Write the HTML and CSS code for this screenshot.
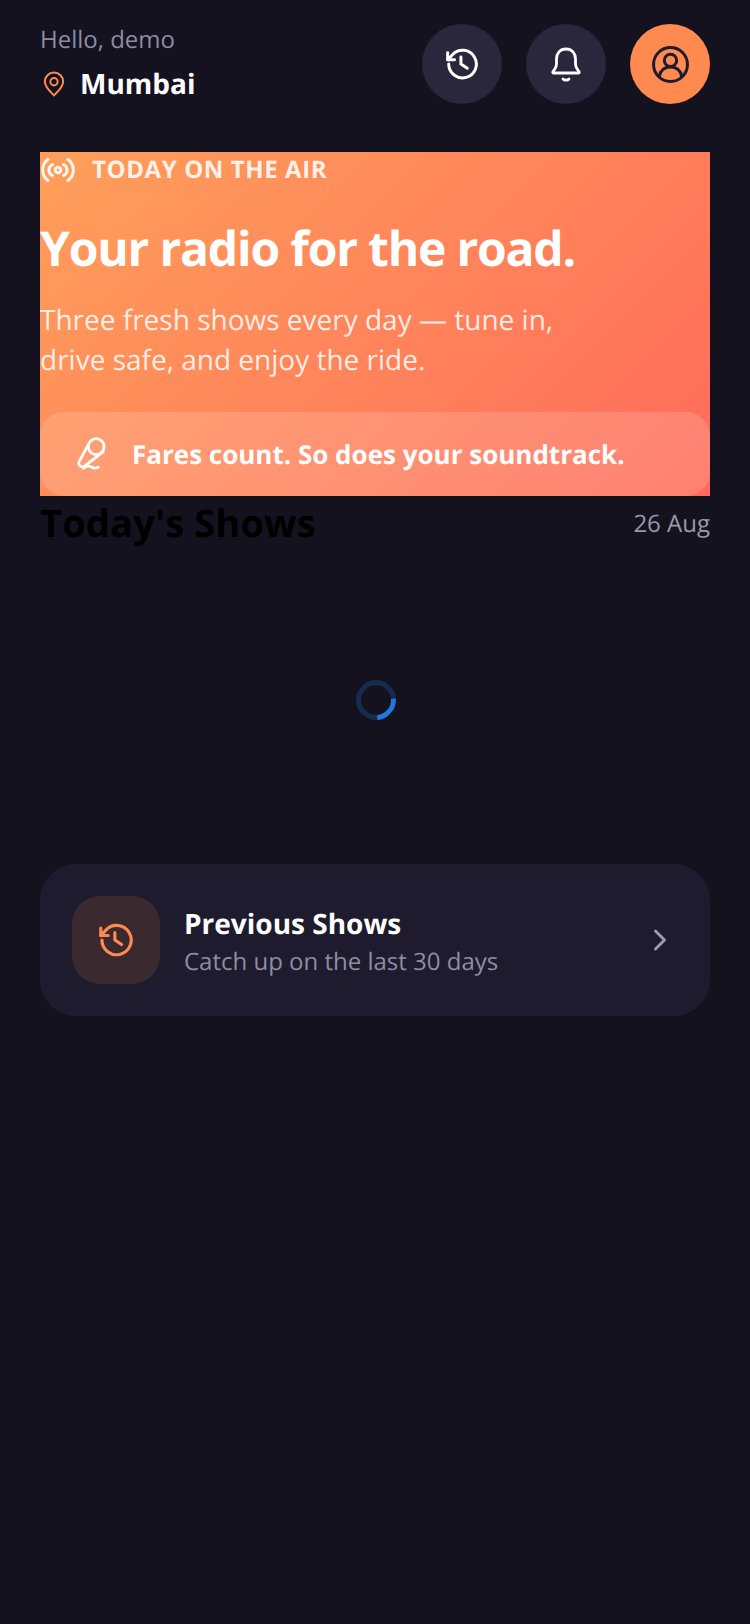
FILE: index.html
```html
<!DOCTYPE html>
<html lang="en">
<head>
  <meta charset="UTF-8" />
  <meta name="viewport" content="width=device-width, initial-scale=1.0" />
  <title>Today on the air</title>
  <link rel="stylesheet" href="styles.css">
</head>
<body>
  <header class="top">
    <div class="who">
      <div class="hello">Hello, demo</div>
      <div class="city">
        <svg class="pin" viewBox="0 0 24 28" fill="none" stroke="currentColor" stroke-width="2.2" stroke-linejoin="round">
          <path d="M12 26.5C7 21.5 2 17 2 11.5a10 10 0 0 1 20 0c0 5.500-5 10-10 15z"/>
          <circle cx="12" cy="11.500" r="4"/>
        </svg>
        <span>Mumbai</span>
      </div>
    </div>
    <div class="actions">
      <button class="round">
        <svg class="icon-history" viewBox="1 0 32 32" fill="none" stroke="currentColor" stroke-width="2.800" stroke-linecap="round" stroke-linejoin="round">
          <path d="M4.500 16A13 13 0 1 0 8 7.200L3.500 12"/>
          <path d="M3.500 5.500V12H10"/>
          <path d="M16 9.500V16l6 4"/>
        </svg>
      </button>
      <button class="round">
        <svg class="icon-bell" viewBox="-1 0 34 35" fill="none" stroke="currentColor" stroke-width="2.800" stroke-linecap="round" stroke-linejoin="round">
          <path d="M16 2c-6 0-9.500 4.500-9.500 10v5c0 3-1.500 5-3.500 7.500-.6 1-.2 1.500 1 1.500h24c1.200 0 1.600-.5 1-1.500-2-2.500-3.500-4.500-3.500-7.500v-5C25.500 6.500 22 2 16 2z"/>
          <path d="M13 32c1.500 1.600 4.500 1.600 6 0"/>
        </svg>
      </button>
      <button class="round round-accent">
        <svg class="icon-user" viewBox="0 0 36 36" fill="none" stroke="currentColor" stroke-width="2.900" stroke-linecap="round" stroke-linejoin="round">
          <circle cx="18" cy="18" r="16.500"/>
          <circle cx="18" cy="14" r="6"/>
          <path d="M7 30c1-6 5-9.500 11-9.500S28 24 29 30"/>
        </svg>
      </button>
    </div>
  </header>

  <section class="hero">
    <div class="air">
      <svg viewBox="0 0 34 24" fill="none" stroke="currentColor" stroke-width="3" stroke-linecap="round">
        <circle cx="17" cy="12" r="2.800"/>
        <path d="M11.500 6.500a6 6 0 0 0 0 11"/>
        <path d="M22.500 6.500a6 6 0 0 1 0 11"/>
        <path d="M7 1.500a13 13 0 0 0 0 21"/>
        <path d="M27 1.500a13 13 0 0 1 0 21"/>
      </svg>
      <span>TODAY ON THE AIR</span>
    </div>
    <h1>Your radio for the road.</h1>
    <p>Three fresh shows every day — tune in,<br>drive safe, and enjoy the ride.</p>
    <div class="tagline">
      <svg viewBox="0 0 30 34" fill="none" stroke="currentColor" stroke-width="2.600" stroke-linecap="round" stroke-linejoin="round">
        <circle cx="18" cy="10" r="7.500"/>
        <path d="M10.500 8.500L2 24c-1.500 3 1.500 6 4.500 5L24.500 15"/>
        <path d="M6 30.500c3-3 6-2 8-1 2 1 4 1 6 0"/>
      </svg>
      <span>Fares count. So does your soundtrack.</span>
    </div>
  </section>

  <div class="shows-head">
    <h2>Today's Shows</h2>
    <span class="date">26 Aug</span>
  </div>

  <div class="loading"><div class="spinner"></div></div>

  <div class="prev-card">
    <div class="prev-icon">
      <svg viewBox="1 0 32 32" fill="none" stroke="currentColor" stroke-width="2.800" stroke-linecap="round" stroke-linejoin="round">
        <path d="M4.500 16A13 13 0 1 0 8 7.200L3.500 12"/>
        <path d="M3.500 5.500V12H10"/>
        <path d="M16 9.500V16l6 4"/>
      </svg>
    </div>
    <div class="prev-text">
      <div class="prev-title">Previous Shows</div>
      <div class="prev-sub">Catch up on the last 30 days</div>
    </div>
    <svg class="chevron" viewBox="0 0 16 24" fill="none" stroke="currentColor" stroke-width="3" stroke-linecap="round" stroke-linejoin="round">
      <path d="M3.500 3l9 9-9 9"/>
    </svg>
  </div>
</body>
</html>
```

FILE: styles.css
```css
* {
  box-sizing: border-box;
}
body {
  margin: 0;
  padding: 24px 40px;
  min-height: 1624px;
  background-color: #14121f;
  font-family: "Open Sans", sans-serif;
  text-rendering: geometricPrecision;
  color: white;
}
svg {
  display: block;
}
.top {
  display: flex;
  justify-content: space-between;
  align-items: flex-start;
  margin-bottom: 48px;
}
.hello {
  font-size: 24px;
  line-height: 32px;
  color: #8e8ca3;
}
.city {
  display: flex;
  align-items: center;
  gap: 15px;
  margin-top: 8px;
  font-size: 28px;
  line-height: 40px;
  font-weight: 700;
}
.pin {
  width: 22px;
  height: 26px;
  margin-left: 3px;
  color: #ff8a50;
}
.actions {
  display: flex;
  gap: 24px;
}
.round {
  display: flex;
  align-items: center;
  justify-content: center;
  width: 80px;
  height: 80px;
  padding: 0;
  border: none;
  border-radius: 50%;
  background-color: #2a263b;
  color: white;
}
.icon-history {
  width: 34px;
  height: 34px;
}
.icon-bell {
  width: 34px;
  height: 35px;
}
.round-accent {
  background-color: #ff8a50;
  color: #1e1b2e;
}
.icon-user {
  width: 37px;
  height: 37px;
}
.hero {
  height: 344px;
  padding-top: 3px;
  background: linear-gradient(135deg, #ff9f5a, #ff6b5b);
  display: flex;
  flex-direction: column;
}
.air {
  display: flex;
  align-items: center;
  gap: 17px;
  font-size: 24px;
  line-height: 30px;
  font-weight: 700;
  letter-spacing: 0.6px;
  color: rgba(255, 255, 255, 0.9);
}
.air svg {
  width: 34px;
  height: 24px;
  margin-left: 1px;
}
.hero h1 {
  margin: 32px 0 0;
  font-size: 48px;
  line-height: 64px;
  font-weight: 700;
  letter-spacing: -1.2px;
}
.hero p {
  margin: 19px 0 0;
  font-size: 28px;
  line-height: 40px;
  color: rgba(255, 255, 255, 0.85);
}
.tagline {
  display: flex;
  align-items: center;
  gap: 23px;
  height: 84px;
  margin-top: auto;
  padding: 0 37px;
  border-radius: 24px;
  background-color: rgba(255, 255, 255, 0.15);
  font-size: 26px;
  font-weight: 700;
}
.tagline svg {
  width: 32px;
  height: 36px;
}
.shows-head {
  display: flex;
  justify-content: space-between;
  align-items: center;
  height: 54px;
}
.shows-head h2 {
  margin: 0;
  font-size: 38px;
  font-weight: 700;
  letter-spacing: 0.15px;
  color: black;
}
.date {
  font-size: 24px;
  color: #9a98ad;
}
.loading {
  display: flex;
  justify-content: center;
  align-items: center;
  height: 314px;
  padding: 0 0 14px 2px;
}
.spinner {
  width: 40px;
  height: 40px;
  border-radius: 50%;
  border: 5px solid rgba(33, 120, 220, 0.25);
  border-top-color: #2178dc;
  transform: rotate(131deg);
}
.prev-card {
  display: flex;
  align-items: center;
  gap: 24px;
  height: 152px;
  padding: 0 32px;
  border-radius: 36px;
  background-color: #1e1b2e;
}
.prev-icon {
  display: flex;
  align-items: center;
  justify-content: center;
  width: 88px;
  height: 88px;
  border-radius: 28px;
  background-color: #3a2a30;
  color: #ff8a50;
}
.prev-icon svg {
  width: 36px;
  height: 36px;
}
.prev-text {
  flex: 1;
  padding-top: 2px;
}
.prev-title {
  font-size: 28px;
  line-height: 42px;
  font-weight: 700;
}
.prev-sub {
  font-size: 24px;
  line-height: 34px;
  color: #8e8ca3;
}
.chevron {
  width: 16px;
  height: 24px;
  margin-right: 10px;
  color: #9a98ad;
}
```
